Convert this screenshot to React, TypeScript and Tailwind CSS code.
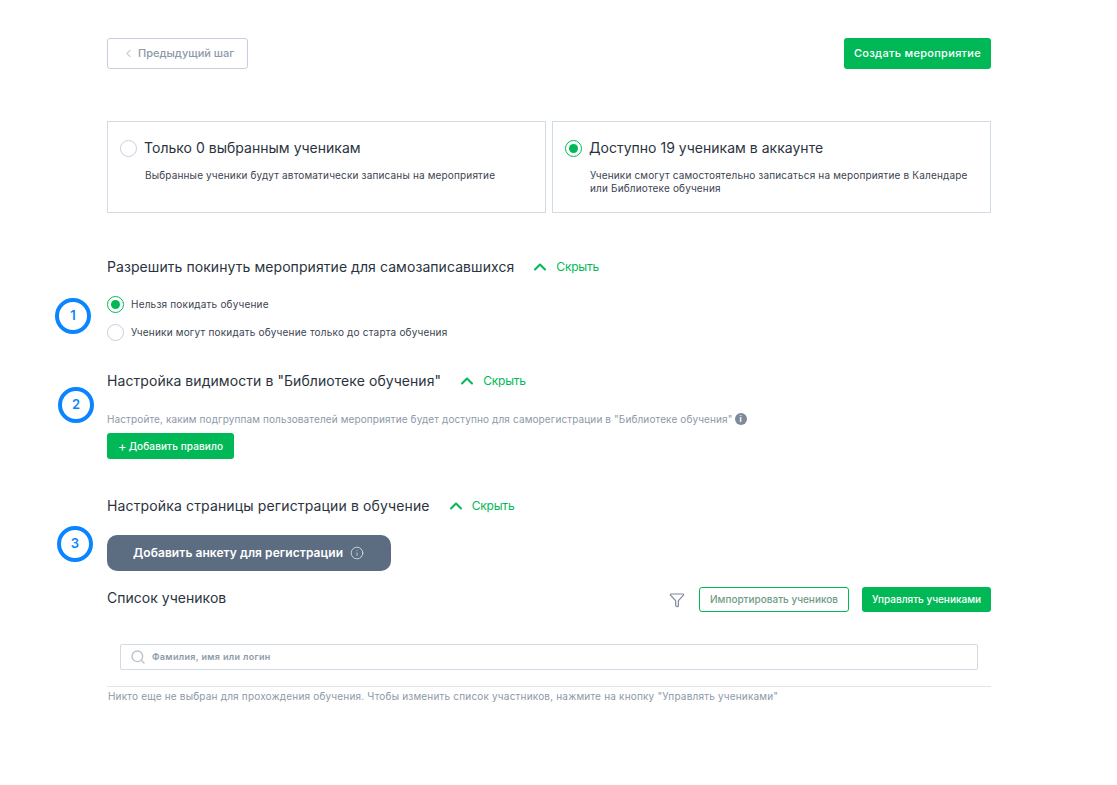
import { ChevronLeft, ChevronUp, Filter, Info, Search } from 'lucide-react'

function Radio({ checked }: { checked?: boolean }) {
  if (checked) {
    return (
      <span className="flex h-[17px] w-[17px] shrink-0 items-center justify-center rounded-full border-[1.5px] border-[#00b956] bg-white">
        <span className="h-[9px] w-[9px] rounded-full bg-[#00b956]" />
      </span>
    )
  }
  return <span className="h-[17px] w-[17px] shrink-0 rounded-full border border-[#c5d0de] bg-white" />
}

function SectionHeading({ title, className, wide }: { title: string; className: string; wide?: boolean }) {
  return (
    <div className={`flex h-5 items-center ${className}`}>
      <span className={`text-[14px] leading-5 text-[#2b3340] ${wide ? 'tracking-[0.14px]' : 'tracking-[0.07px]'}`}>{title}</span>
      <ChevronUp className="ml-[16px] h-5 w-5 text-[#00b956]" strokeWidth={2.4} />
      <span className="ml-[6px] text-[12px] tracking-[-0.2px] text-[#00b956]">Скрыть</span>
    </div>
  )
}

function Marker({ n, className }: { n: number; className: string }) {
  return (
    <div className={`absolute flex h-9 w-9 items-center justify-center rounded-full border-[4px] border-[#0a84ff] bg-white text-[13px] font-semibold text-[#0a84ff] ${className}`}>
      {n}
    </div>
  )
}

function AudienceCard({ checked, title, text }: { checked?: boolean; title: string; text: string }) {
  return (
    <div className="h-[92px] flex-1 border border-[#d0dbe6] px-[12px] pt-[16px]">
      <div className="flex items-center gap-[7px]">
        <Radio checked={checked} />
        <span className="text-[14px] leading-5 tracking-[0.02px] text-[#2b3340]">{title}</span>
      </div>
      <p className="mt-[11px] pl-[25px] text-[10px] leading-[13px] tracking-[0.16px] text-[#3b4452]">{text}</p>
    </div>
  )
}

export default function App() {
  return (
    <div className="relative h-[785px] w-[1117px] overflow-hidden bg-white font-['Inter','Liberation_Sans',sans-serif]">
      <div className="ml-[107px] w-[884px] pt-[38px]">
        <div className="flex items-center justify-between">
          <button className="flex h-[31px] w-[141px] items-center rounded-[3px] border border-[#c5d0de] pl-[14px] text-[11px] font-medium text-[#8d99a8]">
            <ChevronLeft className="h-[13px] w-[13px] text-[#c5d0de]" strokeWidth={2} />
            <span className="ml-[3px]">Предыдущий шаг</span>
          </button>
          <button className="h-[31px] w-[147px] rounded-[3px] bg-[#00b956] text-[11px] font-medium tracking-[0.3px] text-white">Создать мероприятие</button>
        </div>

        <div className="mt-[52px] flex gap-[6px]">
          <AudienceCard title="Только 0 выбранным ученикам" text="Выбранные ученики будут автоматически записаны на мероприятие" />
          <AudienceCard checked title="Доступно 19 ученикам в аккаунте" text="Ученики смогут самостоятельно записаться на мероприятие в Календаре или Библиотеке обучения" />
        </div>

        <SectionHeading className="mt-[44px]" title="Разрешить покинуть мероприятие для самозаписавшихся" />

        <div className="mt-[19px] flex flex-col gap-[11px]">
          <label className="flex items-center gap-[7px]">
            <Radio checked />
            <span className="text-[10px] tracking-[0.2px] text-[#3b4452]">Нельзя покидать обучение</span>
          </label>
          <label className="flex items-center gap-[7px]">
            <Radio />
            <span className="text-[10px] tracking-[0.2px] text-[#3b4452]">Ученики могут покидать обучение только до старта обучения</span>
          </label>
        </div>

        <SectionHeading className="mt-[30px]" title={'Настройка видимости в "Библиотеке обучения"'} />

        <div className="mt-[20px] flex h-4 items-center">
          <span className="text-[10px] tracking-[0.12px] text-[#8d99a8]">Настройте, каким подгруппам пользователей мероприятие будет доступно для саморегистрации в "Библиотеке обучения"</span>
          <span className="ml-[2px] flex h-3 w-3 items-center justify-center rounded-full bg-[#7d8a9c] text-[8px] font-bold text-white">i</span>
        </div>

        <button className="mt-[6px] flex h-[26px] w-[127px] items-center justify-center rounded-[3px] bg-[#00b956] text-[10px] font-medium tracking-[0.12px] text-white">
          <span className="mr-[2px] text-[13px] font-normal leading-none">+</span>
          Добавить правило
        </button>

        <SectionHeading wide className="mt-[37px]" title="Настройка страницы регистрации в обучение" />

        <button className="mt-[19px] flex h-9 w-[284px] items-center rounded-[10px] bg-[#5c6d82] pl-[26px] text-[12px] font-semibold tracking-[0.06px] text-white">
          Добавить анкету для регистрации
          <Info className="ml-[7px] h-[14px] w-[14px] text-[#d5dbe3]" strokeWidth={1.5} />
        </button>

        <div className="mt-[16px] flex h-[25px] items-center">
          <span className="mb-[4px] text-[14px] tracking-[0.03px] text-[#2b3340]">Список учеников</span>
          <Filter className="ml-auto h-4 w-4 text-[#7d8a9c]" strokeWidth={1.8} />
          <button className="ml-[14px] h-[25px] w-[150px] rounded-[3px] border border-[#00b956] text-[10px] font-medium text-[#6f9c86]">Импортировать учеников</button>
          <button className="ml-[13px] h-[25px] w-[129px] rounded-[3px] bg-[#00b956] text-[10px] font-medium text-white">Управлять учениками</button>
        </div>

        <div className="mx-[13px] mt-[32px] flex h-[26px] items-center rounded-[2px] border border-[#d0dbe6] pl-[9px]">
          <Search className="h-4 w-4 text-[#b7c2cf]" strokeWidth={2} />
          <span className="ml-[6px] text-[9px] font-semibold tracking-[0.35px] text-[#8d99a8]">Фамилия, имя или логин</span>
        </div>

        <div className="mt-[16px] border-t border-[#dfe5ec] pl-[1px] pt-[2px] text-[10px] tracking-[0.19px] text-[#8d99a8]">
          Никто еще не выбран для прохождения обучения. Чтобы изменить список участников, нажмите на кнопку "Управлять учениками"
        </div>
      </div>

      <Marker n={1} className="left-[55px] top-[298px]" />
      <Marker n={2} className="left-[58px] top-[387px]" />
      <Marker n={3} className="left-[57px] top-[526px]" />
    </div>
  )
}
